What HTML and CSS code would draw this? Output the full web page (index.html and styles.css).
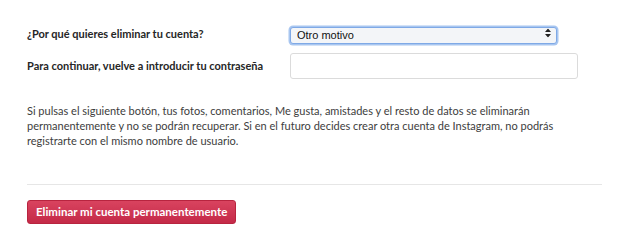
FILE: index.html
```html
<!DOCTYPE html>
<html lang="es">
<head>
    <meta charset="UTF-8">
    <meta name="viewport" content="width=device-width, initial-scale=1.0">
    <title>Eliminar tu cuenta</title>
    <link rel="stylesheet" href="styles.css">
</head>
<body>
    <form class="delete-form" onsubmit="return false;">
        <div class="form-row">
            <label class="form-label" for="reason">¿Por qué quieres eliminar tu cuenta?</label>
            <div class="select-wrap">
                <select id="reason" class="reason-select">
                    <option>Otro motivo</option>
                </select>
                <span class="select-arrows">
                    <svg width="6" height="9" viewBox="0 0 6 9"><path d="M0 3.5 L3 0 L6 3.5 Z M0 5.5 L3 9 L6 5.5 Z" fill="#222"/></svg>
                </span>
            </div>
        </div>
        <div class="form-row">
            <label class="form-label" for="password">Para continuar, vuelve a introducir tu contraseña</label>
            <input type="password" id="password" class="pass-input">
        </div>
        <p class="warning">Si pulsas el siguiente botón, tus fotos, comentarios, Me gusta, amistades y el resto de datos se eliminarán permanentemente y no se podrán recuperar. Si en el futuro decides crear otra cuenta de Instagram, no podrás registrarte con el mismo nombre de usuario.</p>
        <hr class="divider">
        <button class="delete-btn">Eliminar mi cuenta permanentemente</button>
    </form>
</body>
</html>
```
FILE: styles.css
```css
* {
    margin: 0;
    padding: 0;
    box-sizing: border-box;
}
body {
    font-family: 'Lato', 'Liberation Sans', sans-serif;
    background-color: #fff;
    color: #262626;
    width: 640px;
    height: 250px;
    overflow: hidden;
}
.delete-form {
    padding: 23px 38px 0 27px;
}
.form-row {
    display: grid;
    grid-template-columns: 263px 1fr;
    align-items: center;
}
.form-row + .form-row {
    margin-top: 9px;
}
.form-label {
    font-size: 11px;
    font-weight: bold;
    color: #262626;
}
.select-wrap {
    position: relative;
    width: 267px;
}
.reason-select {
    appearance: none;
    -webkit-appearance: none;
    width: 100%;
    height: 17px;
    font-family: 'Liberation Sans', sans-serif;
    font-size: 11px;
    color: #111;
    padding: 0 6px;
    background-color: #f3f5f8;
    border: 1px solid #7fa9e6;
    border-radius: 3px;
    box-shadow: 0 0 0 1.5px #a8c6f0;
    outline: none;
}
.select-arrows {
    position: absolute;
    right: 6px;
    top: 50%;
    transform: translateY(-50%);
    display: flex;
}
.pass-input {
    width: 288px;
    height: 26px;
    border: 1px solid #dbdbdb;
    border-radius: 3px;
    background: #fff;
    outline: none;
}
.warning {
    margin-top: 24px;
    font-size: 11px;
    line-height: 15px;
    color: #3d3d3d;
    max-width: 560px;
}
.divider {
    margin-top: 36px;
    border: none;
    border-top: 1px solid #e6e6e6;
}
.delete-btn {
    margin-top: 15px;
    height: 24px;
    padding: 0 8px;
    font-family: inherit;
    font-size: 11.5px;
    font-weight: bold;
    color: #fff;
    background: linear-gradient(#d9435f, #c42a48);
    border: 1px solid #b8243f;
    border-radius: 3px;
    cursor: pointer;
}
```
